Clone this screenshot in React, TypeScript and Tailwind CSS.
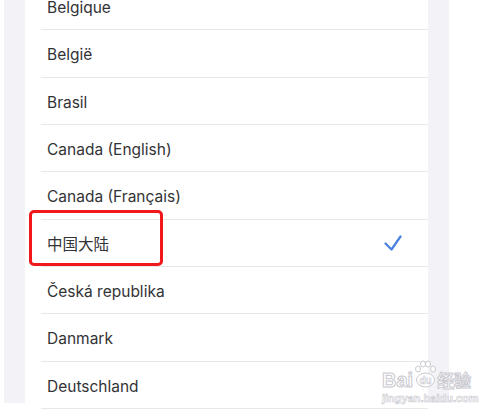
import React from "react";

const regions = [
  "Belgique",
  "België",
  "Brasil",
  "Canada (English)",
  "Canada (Français)",
  "中国大陆",
  "Česká republika",
  "Danmark",
  "Deutschland",
];

const selected = "中国大陆";

function Check() {
  return (
    <svg width="18" height="16" viewBox="0 0 18 16" fill="none" aria-hidden="true">
      <path d="M1.5 8.5L7.5 14.5L16.5 1.5" stroke="#4a80e0" strokeWidth="2.2" strokeLinecap="round" strokeLinejoin="round" />
    </svg>
  );
}

function Watermark() {
  return (
    <div className="absolute left-[382px] top-[360px] flex flex-col items-start pointer-events-none select-none">
      <div className="flex items-end">
        <span className="text-[20px] leading-none font-bold text-white [-webkit-text-stroke:1px_#c9c9cf] font-['Liberation_Sans',sans-serif]">
          Bai
        </span>
        {/* paw mark */}
        <svg width="24" height="30" viewBox="0 0 24 30" aria-hidden="true">
          <g fill="#fff" stroke="#c9c9cf" strokeWidth="1">
            <ellipse cx="5" cy="9" rx="2.5" ry="3" />
            <ellipse cx="10" cy="4" rx="2.5" ry="3" />
            <ellipse cx="15" cy="4" rx="2.5" ry="3" />
            <ellipse cx="20" cy="9" rx="2.5" ry="3" />
            <ellipse cx="12.5" cy="20" rx="9" ry="7" />
          </g>
          <text x="12.5" y="24" textAnchor="middle" fontSize="10" fontWeight="700" fill="#fff" stroke="#c9c9cf" strokeWidth="0.6" fontFamily="Liberation Sans, sans-serif">
            du
          </text>
        </svg>
        <span className="text-[17px] leading-none font-bold text-white [-webkit-text-stroke:1px_#c9c9cf] font-['Noto_Sans_CJK_SC',sans-serif] mb-[2px]">
          经验
        </span>
      </div>
      <span className="mt-[3px] text-[11px] leading-none font-bold text-white [-webkit-text-stroke:0.6px_#c9c9cf] font-['Liberation_Sans',sans-serif]">
        jingyan.baidu.com
      </span>
    </div>
  );
}

export default function App() {
  return (
    <div className="relative w-[500px] h-[420px] overflow-hidden bg-white font-['Inter','Noto_Sans_CJK_SC',sans-serif]">
      <div className="ml-[4px] w-[445px] h-full bg-[#f3f3f7] px-[21px]">
        <div className="-mt-[17px] bg-white">
          {regions.map((name) => (
            <div key={name} className="pl-[16px]">
              <div className="h-[47.33px] flex items-center justify-between pl-[6px] pr-[26px] border-b border-[#e8e8ea]">
                <span className="pt-[3px] text-[15.5px] text-[#333336]">{name}</span>
                {name === selected && <Check />}
              </div>
            </div>
          ))}
          <div className="h-[60px]" />
        </div>
      </div>

      {/* red highlight box */}
      <div className="absolute left-[29px] top-[210px] w-[134px] h-[56px] rounded-[5px] border-[3px] border-[#f2171b]" />

      <Watermark />
    </div>
  );
}
